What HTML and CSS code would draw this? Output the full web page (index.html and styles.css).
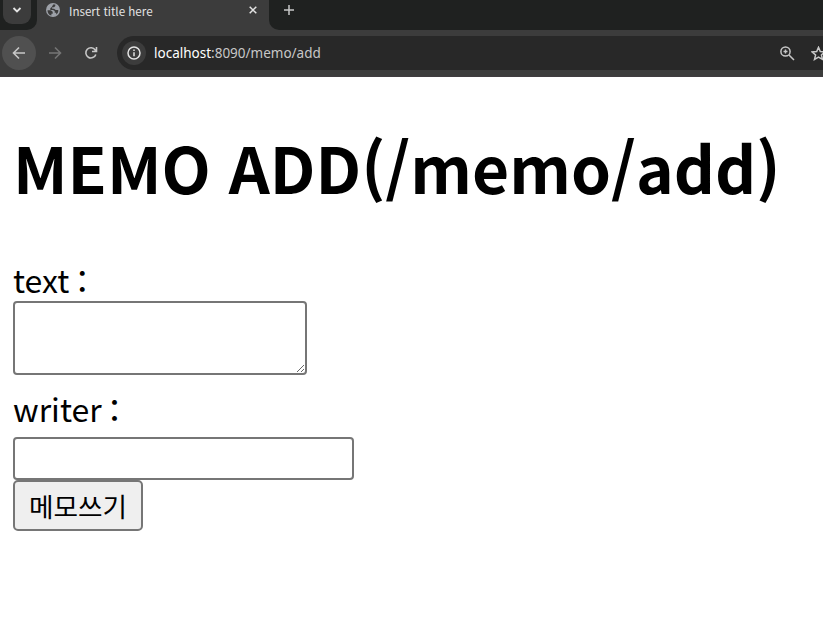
FILE: index.html
```html
<!DOCTYPE html>
<html lang="ko">
<head>
<meta charset="utf-8">
<title>Insert title here</title>
<link rel="stylesheet" href="styles.css">
</head>
<body>
<header class="browser">
  <div class="tabs">
    <div class="search-cell"><span class="tab-search"><svg width="12" height="12" viewBox="0 0 12 12"><path d="M2.5 4 6 7.5 9.5 4" fill="none" stroke="#e3e3e3" stroke-width="1.8"/></svg></span></div>
    <div class="tab">
      <svg class="globe" width="14" height="14" viewBox="0 0 14 14"><circle cx="7" cy="7" r="7" fill="#9da1a8"/><path d="M1.5 7.2h3.2l2 1.6v2H5.4v1.8C3 12 1.4 9.8 1.5 7.2ZM7.2 1.5l2.1.1v1.3L8 4.2H6.2v1.5H8l1.8 1.2h2.5c.2 2-.8 3.8-2.1 4.7V9.8H8.7V8L7 7H4.3V5.2L5.8 4Z" fill="#3c3c3c"/></svg>
      <span class="tab-title">Insert title here</span>
      <svg class="close" width="8" height="8" viewBox="0 0 8 8"><path d="m.7.7 6.6 6.6M7.3.7.7 7.3" stroke="#e3e3e3" stroke-width="1.5"/></svg>
    </div>
    <div class="tab-rest"><svg width="12" height="12" viewBox="0 0 12 12"><path d="M6 1v10M1 6h10" stroke="#c7c7c7" stroke-width="1.5"/></svg></div>
  </div>
  <div class="toolbar">
    <span class="nav back"><svg width="14" height="14" viewBox="0 0 14 14"><path d="M13 7H2M7 1.5 1.5 7 7 12.5" fill="none" stroke="#c7c7c7" stroke-width="1.6"/></svg></span>
    <span class="nav"><svg width="14" height="14" viewBox="0 0 14 14"><path d="M1 7h11M7 1.5 12.5 7 7 12.5" fill="none" stroke="#757575" stroke-width="1.6"/></svg></span>
    <span class="nav"><svg width="14" height="14" viewBox="0 0 14 14"><path d="M11.8 8.4A5.1 5.1 0 1 1 11.2 4L12.5 5.4M12.5 1v4.5H8" fill="none" stroke="#c7c7c7" stroke-width="1.6"/></svg></span>
    <div class="address">
      <span class="info"><svg width="14" height="14" viewBox="0 0 14 14"><circle cx="7" cy="7" r="6" fill="none" stroke="#e3e3e3" stroke-width="1.5"/><path d="M7 6.2v4M7 3.6v1.5" stroke="#e3e3e3" stroke-width="1.5"/></svg></span>
      <span class="url"><span class="host">localhost</span>:8090/memo/add</span>
      <svg class="zoom" width="15" height="15" viewBox="0 0 15 15"><circle cx="5.5" cy="5.5" r="4.6" fill="none" stroke="#c7c7c7" stroke-width="1.5"/><path d="m9 9 5 5M5.5 3.5v4M3.5 5.5h4" stroke="#c7c7c7" stroke-width="1.5"/></svg>
      <svg class="star" width="15" height="15" viewBox="0 0 15 15"><path d="m7.5 1.3 1.8 4.2 4.6.4-3.5 3 1.1 4.5-4-2.4-4 2.4 1.1-4.5-3.5-3 4.6-.4Z" fill="none" stroke="#c7c7c7" stroke-width="1.5"/></svg>
    </div>
  </div>
</header>
<main>
  <h1>MEMO ADD(/memo/add)</h1>
  <form>
    <label class="text-label" for="text">text<span class="colon">：</span></label>
    <textarea id="text"></textarea>
    <label class="writer-label" for="writer">writer<span class="colon">：</span></label>
    <input id="writer" type="text">
    <button type="button">메모쓰기</button>
  </form>
</main>
</body>
</html>
```
FILE: styles.css
```css
* { box-sizing: border-box; }
body {
  margin: 0;
  height: 621px;
  overflow: hidden;
  background: #fff;
  color: #000;
  font-family: "Noto Sans CJK KR", sans-serif;
}
svg { display: block; flex: none; }
.browser { height: 77px; background: #3c3c3c; border-bottom: 1px solid #403c40; }
.tabs { display: flex; height: 30px; }
.search-cell { width: 37px; background: #1f2120; border-radius: 0 0 10px 0; padding-left: 3px; }
.tab-search {
  display: flex;
  width: 28px;
  height: 24px;
  justify-content: center;
  padding-top: 4px;
  background: #3c3c3c;
  border-radius: 0 0 9px 9px;
}
.tab { display: flex; width: 232px; height: 24px; padding-left: 9px; }
.globe { margin-top: 3px; }
.tab-title {
  width: 180px;
  margin-left: 9px;
  color: #e3e3e3;
  font-size: 11.6px;
  line-height: 22px;
  white-space: nowrap;
}
.close { margin-top: 6px; }
.tab-rest { flex: 1; background: #1f2120; border-radius: 0 0 0 10px; padding: 4px 0 0 14px; }
.toolbar { display: flex; height: 46px; align-items: center; padding-left: 2px; }
.nav { display: flex; width: 34px; height: 34px; margin-right: 2px; align-items: center; justify-content: center; border-radius: 50%; }
.back { background: #505050; }
.address {
  display: flex;
  flex: 1;
  min-width: 0;
  height: 34px;
  margin-left: 7px;
  padding-left: 5px;
  align-items: center;
  overflow: hidden;
  background: #282828;
  border-radius: 17px 0 0 17px;
}
.info { display: flex; flex: none; width: 24px; height: 24px; align-items: center; justify-content: center; border-radius: 50%; background: #3c3c3c; }
.url { flex: none; width: 626px; margin-left: 8px; padding-bottom: 1px; color: #c7c7c7; font: 13.5px "Noto Sans", sans-serif; }
.host { color: #fff; }
.star { margin-left: 16px; }
main { padding-left: 13px; }
h1 { margin: 0; height: 178px; padding-top: 40px; font-size: 64px; line-height: 98px; white-space: nowrap; }
form { display: flex; flex-direction: column; align-items: flex-start; font-size: 32px; }
label { line-height: 46px; }
.text-label { height: 46px; padding-top: 1px; }
.writer-label { height: 62px; padding-top: 10px; }
.colon { margin-left: -3px; }
textarea, input { margin: 0; border: 2px solid #767676; border-radius: 4px; background: #fff; outline: 0; }
textarea { width: 294px; height: 74px; resize: both; }
input { width: 341px; height: 43px; }
button {
  width: 130px;
  height: 51px;
  margin: 0;
  padding: 0;
  border: 2px solid #767676;
  border-radius: 5px;
  background: #efefef;
  color: #000;
  font: 26.67px/47px "Noto Sans CJK KR", sans-serif;
}
```
